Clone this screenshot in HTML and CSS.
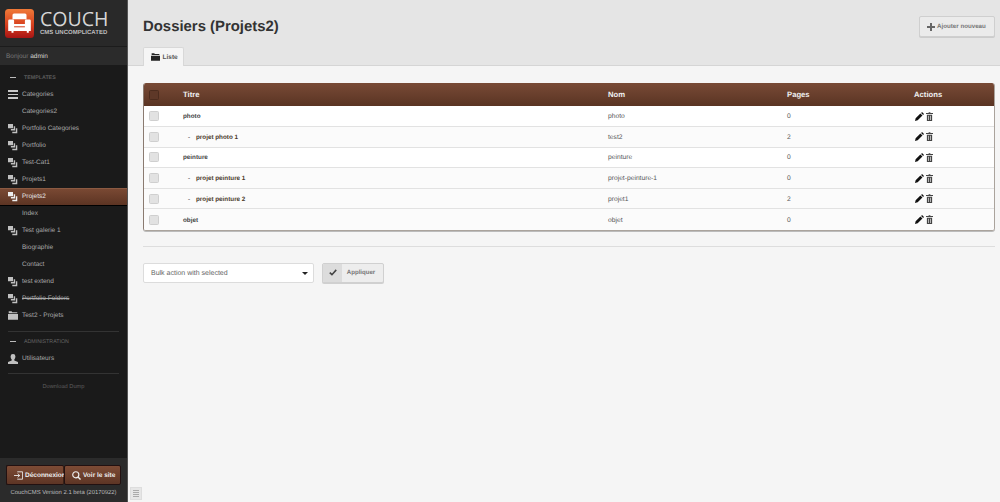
FILE: index.html
```html
<!DOCTYPE html>
<html lang="fr">
<head>
<meta charset="utf-8">
<title>Dossiers (Projets2)</title>
<link rel="stylesheet" href="styles.css">
</head>
<body>
<svg class="defs" width="0" height="0">
  <symbol id="i-multi" viewBox="0 0 14 14"><path d="M0 0h7v6H0zM8 3h2v6H4V7h4zM11 6h2v7H6v-2h5z" fill="currentColor"/></symbol>
  <symbol id="i-folder" viewBox="0 0 14 12"><path d="M1 0h4l1 1.500h7V3H1zM0 4h14v8H0z" fill="currentColor"/></symbol>
  <symbol id="i-edit" viewBox="0 0 10 10"><path d="M0 10l.7-3L6 1.700 8.300 4 3 9.300zM6.800 1l1-1L10 2.200l-1 1z" fill="currentColor"/></symbol>
  <symbol id="i-trash" viewBox="0 0 8 10"><path d="M3 0h2v1h3v1H0V1h3zM1 3h6v7H1zM2.500 4v5h.7V4zM4.800 4v5h.7V4z" fill="currentColor" fill-rule="evenodd"/></symbol>
</svg>
<div class="app">
  <aside class="sidebar">
    <div class="brand">
      <svg class="logo" viewBox="0 0 29 29" width="29" height="29">
        <defs><linearGradient id="lg" x1="0" y1="0" x2="0" y2="1"><stop offset="0" stop-color="#f07a38"/><stop offset=".55" stop-color="#d8401f"/><stop offset="1" stop-color="#a81414"/></linearGradient></defs>
        <rect width="29" height="29" rx="3.500" fill="url(#lg)"/>
        <path d="M9 4.500h11a1.500 1.500 0 0 1 1.500 1.500v4.200h-14V6A1.500 1.500 0 0 1 9 4.500zM4.500 10.500h3.300a1.300 1.300 0 0 1 1.300 1.300V15h10.800v-3.200a1.300 1.300 0 0 1 1.300-1.300h3.300a1.300 1.300 0 0 1 1.300 1.300V22h-2v1.800h-2V22H8.500v1.800h-2V22h-3.300V11.800a1.300 1.300 0 0 1 1.300-1.300z" fill="#fff"/>
        <path d="M9.100 17.800h10.800" stroke="#d0401f" stroke-width="1"/>
      </svg>
      <div class="brand-text">
        <div class="brand-name">COUCH</div>
        <div class="brand-tag">CMS UNCOMPLICATED</div>
      </div>
    </div>
    <div class="hello">Bonjour <b>admin</b></div>
    <nav class="nav">
      <div class="nav-head"><span class="dash"></span>TEMPLATES</div>
      <a class="nav-item"><span class="nav-ic"><span class="bars"><i></i><i></i><i></i></span></span>Categories</a>
      <a class="nav-item"><span class="nav-ic"></span>Categories2</a>
      <a class="nav-item"><span class="nav-ic"><svg class="ic-multi"><use href="#i-multi"/></svg></span>Portfolio Categories</a>
      <a class="nav-item"><span class="nav-ic"><svg class="ic-multi"><use href="#i-multi"/></svg></span>Portfolio</a>
      <a class="nav-item"><span class="nav-ic"><svg class="ic-multi"><use href="#i-multi"/></svg></span>Test-Cat1</a>
      <a class="nav-item"><span class="nav-ic"><svg class="ic-multi"><use href="#i-multi"/></svg></span>Projets1</a>
      <a class="nav-item active"><span class="nav-ic"><svg class="ic-multi"><use href="#i-multi"/></svg></span>Projets2</a>
      <a class="nav-item"><span class="nav-ic"></span>Index</a>
      <a class="nav-item"><span class="nav-ic"><svg class="ic-multi"><use href="#i-multi"/></svg></span>Test galerie 1</a>
      <a class="nav-item"><span class="nav-ic"></span>Biographie</a>
      <a class="nav-item"><span class="nav-ic"></span>Contact</a>
      <a class="nav-item"><span class="nav-ic"><svg class="ic-multi"><use href="#i-multi"/></svg></span>test extend</a>
      <a class="nav-item"><span class="nav-ic"><svg class="ic-multi"><use href="#i-multi"/></svg></span><s>Portfolio Folders</s></a>
      <a class="nav-item"><span class="nav-ic"><svg class="ic-folder"><use href="#i-folder"/></svg></span>Test2 - Projets</a>
      <div class="nav-rule"></div>
      <div class="nav-head admin"><span class="dash"></span>ADMINISTRATION</div>
      <a class="nav-item"><span class="nav-ic"><svg class="ic-user" viewBox="0 0 10 10"><path d="M5 0a2.400 2.400 0 0 1 2.400 2.500C7.400 4 6.700 5 6.300 5.500V6.400L10 8v2H0V8l3.700-1.600V5.500C3.300 5 2.600 4 2.600 2.500A2.400 2.400 0 0 1 5 0z" fill="currentColor"/></svg></span>Utilisateurs</a>
      <div class="nav-rule second"></div>
      <div class="nav-dump">Download Dump</div>
    </nav>
    <div class="side-foot">
      <div class="foot-btns">
        <a class="foot-btn left"><svg class="ic-foot" viewBox="0 0 11 10"><path d="M4 .5h6.500v9H4M0 5h7M4.500 2.700L7 5 4.500 7.300" fill="none" stroke="currentColor" stroke-width="1.100"/></svg>Déconnexion</a>
        <a class="foot-btn right"><svg class="ic-foot" viewBox="0 0 10 10"><circle cx="4.200" cy="4.200" r="3.400" fill="none" stroke="currentColor" stroke-width="1.300"/><path d="M6.700 6.700L9.500 9.500" stroke="currentColor" stroke-width="1.600"/></svg>Voir le site</a>
      </div>
      <div class="version">CouchCMS Version 2.1 beta (20170922)</div>
    </div>
  </aside>
  <main class="main">
    <header class="top">
      <div class="top-row">
        <h1 class="title">Dossiers (Projets2)</h1>
        <a class="btn-add"><svg class="ic-plus" viewBox="0 0 8 8"><path d="M3 0h2v3h3v2H5v3H3V5H0V3h3z" fill="currentColor"/></svg>Ajouter nouveau</a>
      </div>
      <div class="tabs"><span class="tab"><svg class="ic-tab"><use href="#i-folder"/></svg>Liste</span></div>
    </header>
    <section class="content">
      <div class="table-wrap">
        <table class="list">
          <colgroup><col class="c1"><col class="c2"><col class="c3"><col class="c4"><col class="c5"></colgroup>
          <thead>
            <tr><th><span class="check dark"></span></th><th>Titre</th><th>Nom</th><th>Pages</th><th>Actions</th></tr>
          </thead>
          <tbody>
            <tr><td><span class="check"></span></td><td class="name">photo</td><td>photo</td><td>0</td><td class="acts"><svg class="ic-edit"><use href="#i-edit"/></svg><svg class="ic-trash"><use href="#i-trash"/></svg></td></tr>
            <tr class="alt"><td><span class="check"></span></td><td class="name"><span class="sub">-</span><span class="child">projet photo 1</span></td><td>test2</td><td>2</td><td class="acts"><svg class="ic-edit"><use href="#i-edit"/></svg><svg class="ic-trash"><use href="#i-trash"/></svg></td></tr>
            <tr><td><span class="check"></span></td><td class="name">peinture</td><td>peinture</td><td>0</td><td class="acts"><svg class="ic-edit"><use href="#i-edit"/></svg><svg class="ic-trash"><use href="#i-trash"/></svg></td></tr>
            <tr class="alt"><td><span class="check"></span></td><td class="name"><span class="sub">-</span><span class="child">projet peinture 1</span></td><td>projet-peinture-1</td><td>0</td><td class="acts"><svg class="ic-edit"><use href="#i-edit"/></svg><svg class="ic-trash"><use href="#i-trash"/></svg></td></tr>
            <tr class="alt"><td><span class="check"></span></td><td class="name"><span class="sub">-</span><span class="child">projet peinture 2</span></td><td>projet1</td><td>2</td><td class="acts"><svg class="ic-edit"><use href="#i-edit"/></svg><svg class="ic-trash"><use href="#i-trash"/></svg></td></tr>
            <tr class="alt"><td><span class="check"></span></td><td class="name">objet</td><td>objet</td><td>0</td><td class="acts"><svg class="ic-edit"><use href="#i-edit"/></svg><svg class="ic-trash"><use href="#i-trash"/></svg></td></tr>
          </tbody>
        </table>
      </div>
      <div class="rule"></div>
      <div class="bulk">
        <div class="select">Bulk action with selected<span class="caret"></span></div>
        <a class="apply"><span class="apply-ic"><svg class="ic-check" viewBox="0 0 9 8"><path d="M.8 4.200L3.300 6.500 8.200 1" fill="none" stroke="currentColor" stroke-width="1.800"/></svg></span><span class="apply-txt">Appliquer</span></a>
      </div>
      <div class="toggle"><span></span><span></span><span></span><span></span></div>
    </section>
  </main>
</div>
</body>
</html>
```
FILE: styles.css
```css
* { box-sizing: border-box; }
html, body { margin: 0; height: 100%; }
body { font-family: "Liberation Sans", Arial, sans-serif; font-size: 6.500px; overflow: hidden; background: #f5f5f5; text-rendering: geometricPrecision; }
.defs { position: absolute; }
a { text-decoration: none; color: inherit; }

.app { display: flex; width: 1000px; height: 502px; }

.sidebar { width: 128px; flex: none; display: flex; flex-direction: column; background: #1a1a1a; border-right: 1px solid #555; color: #9a9a9a; }
.brand { height: 47px; background: #292929; display: flex; align-items: flex-start; padding: 9px 0 0 5px; gap: 6px; border-bottom: 1px solid #1c1c1c; }
.logo { display: block; flex: none; }
.brand-name { font-family: "Open Sans", sans-serif; font-size: 19.500px; line-height: 20px; color: #d6d6d6; font-weight: 400; }
.brand-tag { font-size: 6px; line-height: 8px; font-weight: 700; color: #bdbdbd; white-space: nowrap; }
.hello { height: 18px; background: #2b2b2b; line-height: 19px; padding-left: 6px; color: #777; }
.hello b { font-weight: 400; color: #d8d8d8; }

.nav { flex: 1; padding-top: 4px; }
.nav-head { height: 17px; display: flex; align-items: center; font-size: 5.300px; color: #5a5a5a; font-weight: 700; padding-left: 10px; }
.nav-head.admin { font-weight: 400; color: #666; }
.dash { width: 6px; height: 1.500px; background: #bbb; margin-right: 8px; }
.nav-item { height: 17px; display: flex; align-items: center; color: #aaa; white-space: nowrap; }
.nav-item s { text-decoration-thickness: 1px; }
.nav-ic { width: 22px; flex: none; display: flex; justify-content: flex-start; padding-left: 8px; align-items: center; color: #c0c0c0; }
.nav-item.active { color: #e8e8e8; background: linear-gradient(#7b4a34, #5c3423); box-shadow: inset 0 1px 0 #8b5a42, 0 1px 0 #000; }
.nav-item.active .nav-ic { color: #eee; }
.bars { display: block; width: 10px; }
.bars i { display: block; height: 1.500px; background: #c8c8c8; margin-bottom: 1.800px; }
.bars i:last-child { margin-bottom: 0; }
.ic-multi { width: 10px; height: 10px; display: block; }
.ic-folder { width: 10px; height: 9px; display: block; }
.ic-user { width: 10px; height: 10px; display: block; }
.nav-rule { height: 1px; background: #333; margin: 7px 8px 1px; }
.nav-rule.second { margin: 6px 8px 0; }
.nav-dump { text-align: center; font-size: 5.700px; color: #5c5c5c; margin-top: 10px; }

.side-foot { height: 44px; flex: none; background: #2b2b2b; padding: 7px 6px 0; }
.foot-btns { display: flex; height: 20px; }
.foot-btn { display: flex; align-items: center; width: 58px; color: #ececec; font-weight: 700; background: linear-gradient(#7d4b35, #5d3525); border: 1px solid #211; border-radius: 2px; white-space: nowrap; font-size: 6.500px; padding-left: 7px; }
.foot-btn.left { border-right-color: #3a2015; }
.ic-foot { width: 9px; height: 9px; margin-right: 2px; flex: none; }
.version { text-align: center; font-size: 5.900px; color: #bbb; margin-top: 5px; white-space: nowrap; }

.main { flex: 1; min-width: 0; display: flex; flex-direction: column; }
.top { height: 66px; background: #e5e5e5; border-bottom: 1px solid #d5d5d5; padding: 0 5px 0 15px; }
.top-row { display: flex; justify-content: space-between; align-items: flex-start; height: 47px; padding-top: 16px; }
.title { margin: 0; font-size: 14.900px; line-height: 22px; font-weight: 700; color: #333; }
.btn-add { width: 76px; height: 21px; display: flex; align-items: center; padding-left: 7px; color: #777; font-weight: 700; background: #ebebeb; border: 1px solid #cfcfcf; border-radius: 2px; box-shadow: 0 1px 0 #ccc; white-space: nowrap; font-size: 6.200px; }
.ic-plus { width: 8px; height: 8px; margin-right: 2px; color: #666; flex: none; }
.tabs { display: flex; height: 19px; }
.tab { width: 41px; height: 19px; background: #f5f5f5; border: 1px solid #d8d8d8; border-bottom: 0; border-radius: 2px 2px 0 0; display: flex; align-items: center; padding-left: 7px; color: #555; font-weight: 700; font-size: 6.500px; }
.ic-tab { width: 9px; height: 8px; margin-right: 2.500px; color: #222; }

.content { flex: 1; position: relative; padding: 17px 5px 0 15px; }
.table-wrap { border: 1px solid #aaa39c; border-top: 0; border-left-color: #8a7a70; border-radius: 3px; overflow: hidden; box-shadow: 0 1px 0 #bbb; }
.list { width: 100%; border-collapse: collapse; table-layout: fixed; background: #fff; color: #555; }
.c1 { width: 33px; }
.c2 { width: 425px; }
.c3 { width: 179px; }
.c4 { width: 127px; }
.list th { height: 23px; padding: 0 0 0 6px; text-align: left; font-weight: 700; font-size: 7.700px; color: #f0f0f0; background: linear-gradient(#784a36, #5a3423); }
.list th:first-child, .list td:first-child { padding-left: 5px; }
.list td { height: 20.600px; padding: 1px 0 0 6px; border-top: 1px solid #e2e2e2; font-size: 6.700px; color: #555; }
.list td:first-child { padding-top: 0; }
.list tbody tr:first-child td { border-top: 0; }
.list tr.alt td { background: #fbfbfb; }
.list td.name { font-weight: 700; color: #444; font-size: 6.300px; }
.sub { display: inline-block; width: 13px; padding-left: 5px; color: #777; }
.child { color: #4a3a2a; }
.check { display: block; width: 10px; height: 10px; background: #e2e2e2; border: 1px solid #cfcfcf; border-radius: 1.500px; }
.check.dark { background: #5e3828; border-color: #4c2c1e; }
.list td.acts { padding: 0 0 0 7px; }
.acts svg { display: inline-block; vertical-align: middle; }
.ic-edit { width: 9px; height: 9px; margin-right: 2px; color: #111; }
.ic-trash { width: 7px; height: 9px; color: #444; }

.rule { height: 1px; background: #ddd; margin-top: 15px; }
.bulk { display: flex; gap: 8px; margin-top: 16px; }
.select { position: relative; width: 171px; height: 20px; line-height: 19px; padding-left: 7px; background: #fff; border: 1px solid #dcdcdc; border-radius: 2px; color: #666; font-size: 7px; }
.caret { position: absolute; right: 5px; top: 8px; border-left: 3px solid transparent; border-right: 3px solid transparent; border-top: 3px solid #222; }
.apply { display: flex; width: 62px; height: 20px; background: #ededed; border: 1px solid #d0d0d0; border-radius: 2px; box-shadow: 0 1px 0 #d0d0d0; overflow: hidden; }
.apply-ic { width: 19px; background: #dcdcdc; display: flex; align-items: center; justify-content: center; color: #444; }
.ic-check { width: 8px; height: 7px; }
.apply-txt { flex: 1; text-align: center; line-height: 18px; color: #777; font-weight: 700; font-size: 6.100px; padding-right: 3px; }
.toggle { position: absolute; left: 2px; bottom: 2px; width: 12px; height: 13px; background: #e6e6e6; border: 1px solid #ddd; padding: 2px; display: flex; flex-direction: column; justify-content: space-between; }
.toggle span { display: block; height: 1px; background: #aaa; }
```
